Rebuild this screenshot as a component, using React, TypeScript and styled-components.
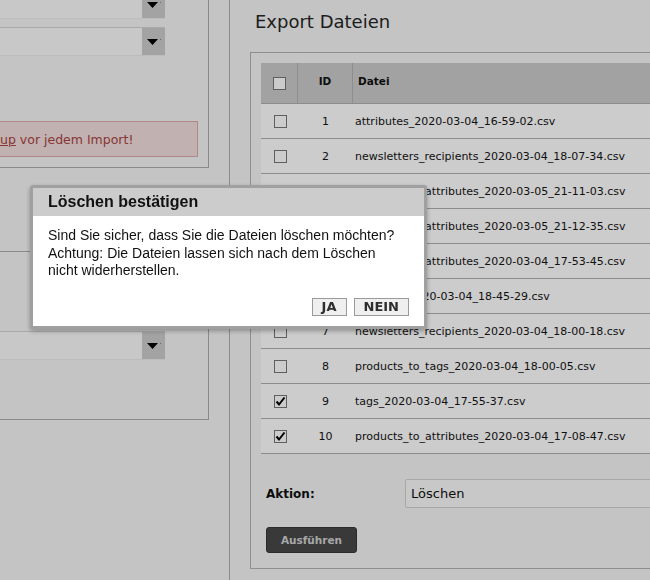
import React from "react";
import styled, { createGlobalStyle } from "styled-components";

const Global = createGlobalStyle`
  html, body { margin: 0; padding: 0; background: #f6f6f6; overflow: hidden; }
  body { font-family: "DejaVu Sans", Verdana, sans-serif; color: #1a1a1a; }
  * { box-sizing: border-box; }
`;

const Page = styled.div`
  display: flex;
  align-items: flex-start;
  width: 650px;
  height: 580px;
  overflow: hidden;
`;

const LeftColumn = styled.div`
  flex: none;
  width: 209px;
  display: flex;
  flex-direction: column;
`;

const Box = styled.div<{ $top: number; $padTop: number; $padBottom: number }>`
  margin-top: ${(p) => p.$top}px;
  padding: ${(p) => p.$padTop}px 10px ${(p) => p.$padBottom}px 0;
  border: 1px solid #acacac;
  border-left: none;
  display: flex;
  flex-direction: column;
  gap: 8px;
`;

const Select = styled.div`
  display: flex;
  width: 165px;
  height: 29px;
  background: #fafafa;
  border-top: 1px solid #d4d4d4;
  border-bottom: 1px solid #ececec;
`;

const SelectValue = styled.div`
  flex: 1;
`;

const SelectArrow = styled.div`
  flex: none;
  width: 23px;
  background: #cccccc;
  display: flex;
  align-items: center;
  justify-content: center;
`;

const Warning = styled.div`
  margin-top: 57px;
  width: 198px;
  height: 36px;
  background: #f2dede;
  border: 1px solid #dcaaaa;
  border-left: none;
  color: #a94442;
  font-size: 12.5px;
  display: flex;
  align-items: center;
  white-space: nowrap;
`;

const WarningLink = styled.span`
  text-decoration: underline;
`;

const RightPanel = styled.div`
  flex: none;
  width: 620px;
  height: 580px;
  margin-left: 20px;
  border-left: 1px solid #afafaf;
  padding-left: 20px;
`;

const Title = styled.h2`
  margin: 11px 0 19px 5px;
  font-size: 18px;
  line-height: 22px;
  font-weight: normal;
  color: #262626;
`;

const Fieldset = styled.div`
  border: 1px solid #b3b3b3;
  padding: 10px 10px 15px 10px;
`;

const Table = styled.div`
  display: flex;
  flex-direction: column;
`;

const HeadRow = styled.div`
  display: grid;
  grid-template-columns: 37px 55px 1fr;
  height: 41px;
  background: #cbcbcb;
  border-bottom: 1px solid #b0b0b0;
`;

const HeadCell = styled.div<{ $center?: boolean; $sep?: boolean; $raised?: boolean }>`
  display: flex;
  align-items: center;
  justify-content: ${(p) => (p.$center ? "center" : "flex-start")};
  padding-left: ${(p) => (p.$center ? 0 : 5)}px;
  padding-bottom: ${(p) => (p.$raised ? 5 : 0)}px;
  border-right: ${(p) => (p.$sep ? "1px solid #b2b2b2" : "none")};
  font-size: 10.5px;
  font-weight: bold;
  color: #111;
`;

const Row = styled.div`
  display: grid;
  grid-template-columns: 37px 55px 1fr;
  height: 35px;
  background: #ffffff;
  border-bottom: 1px solid #b0b0b0;
  font-size: 11px;
  color: #141414;
`;

const Cell = styled.div<{ $center?: boolean }>`
  display: flex;
  align-items: center;
  justify-content: ${(p) => (p.$center ? "center" : "flex-start")};
  padding-left: ${(p) => (p.$center ? 0 : 2)}px;
  white-space: nowrap;
`;

const Check = styled.span`
  width: 13px;
  height: 13px;
  border: 1px solid #777;
  background: #fff;
  display: inline-flex;
  align-items: center;
  justify-content: center;
  margin-left: 1px;
`;

const ActionRow = styled.div`
  display: flex;
  align-items: center;
  margin-top: 25px;
`;

const ActionLabel = styled.label`
  width: 144px;
  padding-left: 5px;
  font-size: 12px;
  font-weight: bold;
  color: #111;
`;

const ActionSelect = styled.div`
  flex: 1;
  height: 29px;
  background: #fafafa;
  border: 1px solid #d2d2d2;
  border-radius: 2px;
  padding-left: 5px;
  display: flex;
  align-items: center;
  font-size: 13px;
  color: #111;
`;

const RunButton = styled.button`
  margin: 19px 0 0 5px;
  width: 91px;
  height: 26px;
  background: #484848;
  border: 1px solid #363636;
  border-radius: 3px;
  color: #d2d2d2;
  font-family: "DejaVu Sans", Verdana, sans-serif;
  font-weight: bold;
  font-size: 10.5px;
  padding: 0 0 1px 0;
  display: block;
`;

const Overlay = styled.div`
  position: fixed;
  inset: 0;
  background: rgba(0, 0, 0, 0.2);
`;

const Dialog = styled.div`
  position: fixed;
  left: 30px;
  top: 185px;
  width: 397px;
  border: 3px solid #a0a0a0;
  border-radius: 3px;
  background: #fff;
  box-shadow: 0 2px 5px rgba(0, 0, 0, 0.3);
  font-family: "Liberation Sans", Arial, sans-serif;
`;

const DialogHeader = styled.div`
  height: 28px;
  line-height: 28px;
  padding: 0 15px;
  background: #cccccc;
  font-size: 16px;
  font-weight: bold;
  color: #111;
`;

const DialogBody = styled.div`
  padding: 11px 15px 10px 15px;
`;

const DialogText = styled.p`
  margin: 0;
  font-size: 14px;
  line-height: 17.5px;
  color: #111;
`;

const DialogButtons = styled.div`
  display: flex;
  justify-content: flex-end;
  gap: 7px;
  margin-top: 18.5px;
`;

const DialogButton = styled.button`
  height: 18px;
  padding: 0 9px;
  background: #efefef;
  border: 1px solid #9a9a9a;
  color: #2e2e2e;
  font-family: "DejaVu Sans", Verdana, sans-serif;
  font-weight: bold;
  font-size: 13px;
  line-height: 16px;
`;

const Arrow = () => (
  <svg width="14" height="6" viewBox="0 0 14 6">
    <polygon points="0,0 11,0 5.5,6" fill="#000" />
    <rect x="13" y="0" width="1" height="1" fill="#888" />
  </svg>
);

const Tick = () => (
  <svg width="11" height="11" viewBox="0 0 11 11">
    <path d="M1.5 5.5 L4 8.5 L9.5 1.5" stroke="#000" strokeWidth="2" fill="none" />
  </svg>
);

const files: { id: number; name: string; checked: boolean }[] = [
  { id: 1, name: "attributes_2020-03-04_16-59-02.csv", checked: false },
  { id: 2, name: "newsletters_recipients_2020-03-04_18-07-34.csv", checked: false },
  { id: 3, name: "products_to_attributes_2020-03-05_21-11-03.csv", checked: false },
  { id: 4, name: "products_to_attributes_2020-03-05_21-12-35.csv", checked: false },
  { id: 5, name: "products_to_attributes_2020-03-04_17-53-45.csv", checked: false },
  { id: 6, name: "products_2020-03-04_18-45-29.csv", checked: false },
  { id: 7, name: "newsletters_recipients_2020-03-04_18-00-18.csv", checked: false },
  { id: 8, name: "products_to_tags_2020-03-04_18-00-05.csv", checked: false },
  { id: 9, name: "tags_2020-03-04_17-55-37.csv", checked: true },
  { id: 10, name: "products_to_attributes_2020-03-04_17-08-47.csv", checked: true },
];

const SelectBox = () => (
  <Select>
    <SelectValue />
    <SelectArrow>
      <Arrow />
    </SelectArrow>
  </Select>
);

export default function App() {
  return (
    <>
      <Global />
      <Page>
        <LeftColumn>
          <Box $top={-20} $padTop={9} $padBottom={10}>
            <SelectBox />
            <SelectBox />
            <Warning>
              <WarningLink>up</WarningLink>&nbsp;vor jedem Import!
            </Warning>
          </Box>
          <Box $top={83} $padTop={79} $padBottom={59}>
            <SelectBox />
          </Box>
        </LeftColumn>
        <RightPanel>
          <Title>Export Dateien</Title>
          <Fieldset>
            <Table>
              <HeadRow>
                <HeadCell $center $sep>
                  <Check />
                </HeadCell>
                <HeadCell $center $sep $raised>ID</HeadCell>
                <HeadCell $raised>Datei</HeadCell>
              </HeadRow>
              {files.map((f) => (
                <Row key={f.id}>
                  <Cell $center>
                    <Check>{f.checked && <Tick />}</Check>
                  </Cell>
                  <Cell $center>{f.id}</Cell>
                  <Cell>{f.name}</Cell>
                </Row>
              ))}
            </Table>
            <ActionRow>
              <ActionLabel>Aktion:</ActionLabel>
              <ActionSelect>Löschen</ActionSelect>
            </ActionRow>
            <RunButton>Ausführen</RunButton>
          </Fieldset>
        </RightPanel>
      </Page>
      <Overlay />
      <Dialog>
        <DialogHeader>Löschen bestätigen</DialogHeader>
        <DialogBody>
          <DialogText>
            Sind Sie sicher, dass Sie die Dateien löschen möchten?
            <br />
            Achtung: Die Dateien lassen sich nach dem Löschen
            <br />
            nicht widerherstellen.
          </DialogText>
          <DialogButtons>
            <DialogButton>JA</DialogButton>
            <DialogButton>NEIN</DialogButton>
          </DialogButtons>
        </DialogBody>
      </Dialog>
    </>
  );
}
